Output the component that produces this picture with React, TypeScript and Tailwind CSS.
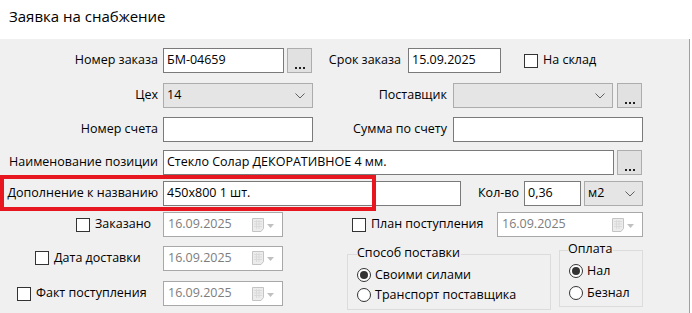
import React from "react";

const Label = ({ w, children, className = "" }: { w: number; children: React.ReactNode; className?: string }) => (
  <div style={{ width: w }} className={`shrink-0 text-right whitespace-nowrap ${className}`}>
    {children}
  </div>
);

const TextBox = ({ w, value = "", className = "" }: { w: number; value?: string; className?: string }) => (
  <div
    style={{ width: w }}
    className={`shrink-0 h-[25px] border border-[#7a7a7a] bg-white pl-[3px] flex items-center whitespace-nowrap overflow-hidden text-black ${className}`}
  >
    {value}
  </div>
);

const Dots = ({ className = "" }: { className?: string }) => (
  <div className={`shrink-0 w-[25px] h-[25px] border border-[#adadad] bg-[#e1e1e1] flex items-end justify-center pb-[3px] ${className}`}>
    <div className="flex gap-[2px]">
      <span className="w-[2px] h-[2px] bg-[#222]" />
      <span className="w-[2px] h-[2px] bg-[#222]" />
      <span className="w-[2px] h-[2px] bg-[#222]" />
    </div>
  </div>
);

const Chevron = () => (
  <svg width="10" height="6" viewBox="0 0 10 6" className="shrink-0">
    <path d="M0.5 0.5 L5 5 L9.5 0.5" fill="none" stroke="#606060" strokeWidth="1" />
  </svg>
);

const Select = ({ w, value = "", className = "" }: { w: number; value?: string; className?: string }) => (
  <div
    style={{ width: w }}
    className={`shrink-0 h-[25px] border border-[#acacac] bg-[#e5e5e5] pl-[3px] pr-[7px] flex items-center justify-between ${className}`}
  >
    <span>{value}</span>
    <Chevron />
  </div>
);

const CalIcon = () => (
  <svg width="24" height="14" viewBox="0 0 24 14" className="shrink-0">
    <path d="M0.5 0.5 H11.5 V10.5 L9 13.5 H0.5 Z" fill="#ececec" stroke="#c4c4c4" />
    <path d="M2 3.5 H10 M2 6 H10 M2 8.5 H10 M4.5 2 V11 M7 2 V11" stroke="#dadada" strokeWidth="1" />
    <path d="M15 6 L22 6 L18.5 10 Z" fill="#c0c0c0" />
  </svg>
);

const DateBox = ({ w, value }: { w: number; value: string }) => (
  <div
    style={{ width: w }}
    className="shrink-0 h-[25px] border border-[#a8a8a8] bg-white pl-[4px] pr-[6px] flex items-center justify-between text-[#7d7d7d]"
  >
    <span>{value}</span>
    <CalIcon />
  </div>
);

const Check = ({ className = "" }: { className?: string }) => (
  <span className={`shrink-0 inline-block w-[14px] h-[14px] border border-[#333] bg-white ${className}`} />
);

const Radio = ({ checked }: { checked?: boolean }) => (
  <span className="shrink-0 w-[14px] h-[14px] rounded-full border border-[#333] bg-white flex items-center justify-center">
    {checked && <span className="w-[8px] h-[8px] rounded-full bg-[#333]" />}
  </span>
);

export default function App() {
  return (
    <div className="w-[692px] h-[313px] bg-white overflow-hidden font-['Open_Sans',sans-serif] text-[12.5px] text-black leading-none">
      <div className="h-[39px] pl-[9px] pt-[9px] text-[15px] text-black">Заявка на снабжение</div>
      <div className="relative w-[690px] h-[274px] bg-[#f0f0f0] border-r border-[#a0a0a0]">
        {/* Row 1 */}
        <div className="pt-[9px] flex items-center h-[34px]">
          <Label w={158}>Номер заказа</Label>
          <TextBox w={121} value="БМ-04659" className="ml-[5px]" />
          <Dots className="ml-[3px]" />
          <Label w={89}>Срок заказа</Label>
          <TextBox w={93} value="15.09.2025" className="ml-[7px]" />
          <Check className="ml-[23px]" />
          <span className="ml-[5px]">На склад</span>
        </div>
        {/* Row 2 */}
        <div className="mt-[10px] flex items-center h-[25px]">
          <Label w={158}>Цех</Label>
          <Select w={150} value="14" className="ml-[5px]" />
          <Label w={134}>Поставщик</Label>
          <Select w={160} className="ml-[6px]" />
          <Dots className="ml-[4px]" />
        </div>
        {/* Row 3 */}
        <div className="mt-[9px] flex items-center h-[25px]">
          <Label w={158}>Номер счета</Label>
          <TextBox w={150} className="ml-[5px]" />
          <Label w={134}>Сумма по счету</Label>
          <TextBox w={190} className="ml-[6px]" />
        </div>
        {/* Row 4 */}
        <div className="mt-[8px] flex items-center h-[25px]">
          <Label w={158}>Наименование позиции</Label>
          <TextBox w={451} value="Стекло Солар ДЕКОРАТИВНОЕ 4 мм." className="ml-[5px]" />
          <Dots className="ml-[3px]" />
        </div>
        {/* Row 5 */}
        <div className="mt-[6px] flex items-center h-[25px]">
          <Label w={158}>Дополнение к названию</Label>
          <TextBox w={298} value="450x800 1 шт." className="ml-[5px]" />
          <Label w={58}>Кол-во</Label>
          <TextBox w={57} value="0,36" className="ml-[5px]" />
          <Select w={59} value="м2" className="ml-[3px]" />
        </div>
        {/* Row 6 */}
        <div className="mt-[6px] flex items-center h-[25px]">
          <div className="w-[163px] shrink-0 flex items-center pl-[76px] gap-[5px]">
            <Check />
            <span>Заказано</span>
          </div>
          <DateBox w={120} value="16.09.2025" />
          <div className="w-[214px] shrink-0 flex items-center pl-[69px] gap-[5px]">
            <Check />
            <span className="whitespace-nowrap">План поступления</span>
          </div>
          <DateBox w={146} value="16.09.2025" />
        </div>
        {/* Rows 7-8 with group boxes */}
        <div className="mt-[8px] flex items-start">
          <div className="w-[283px] shrink-0 flex flex-col gap-[10px]">
            <div className="flex items-center h-[26px]">
              <div className="w-[163px] shrink-0 flex items-center pl-[35px] gap-[5px]">
                <Check />
                <span className="whitespace-nowrap">Дата доставки</span>
              </div>
              <DateBox w={120} value="16.09.2025" />
            </div>
            <div className="flex items-center h-[25px]">
              <div className="w-[163px] shrink-0 flex items-center pl-[17px] gap-[5px]">
                <Check />
                <span className="whitespace-nowrap">Факт поступления</span>
              </div>
              <DateBox w={120} value="16.09.2025" />
            </div>
          </div>
          <div className="relative ml-[64px] mt-[9px] w-[204px] h-[56px] border border-[#dcdcdc] pt-[10px] pl-[9px]">
            <span className="absolute left-[9px] top-[-8px] bg-[#f0f0f0] pr-[1px]">Способ поставки</span>
            <div className="flex items-center gap-[4px] h-[20px]">
              <Radio checked />
              <span>Своими силами</span>
            </div>
            <div className="flex items-center gap-[4px] h-[20px]">
              <Radio />
              <span>Транспорт поставщика</span>
            </div>
          </div>
          <div className="relative ml-[8px] mt-[5px] w-[84px] h-[57px] border border-[#dcdcdc] pt-[9px] pl-[9px]">
            <span className="absolute left-[8px] top-[-8px] bg-[#f0f0f0] pr-[1px]">Оплата</span>
            <div className="flex items-center gap-[4px] h-[22px]">
              <Radio checked />
              <span>Нал</span>
            </div>
            <div className="flex items-center gap-[4px] h-[22px]">
              <Radio />
              <span>Безнал</span>
            </div>
          </div>
        </div>
        {/* red highlight annotation */}
        <div className="absolute left-0 top-[136px] w-[376px] h-[36px] border-[4px] border-[#e8161e] pointer-events-none" />
      </div>
    </div>
  );
}
